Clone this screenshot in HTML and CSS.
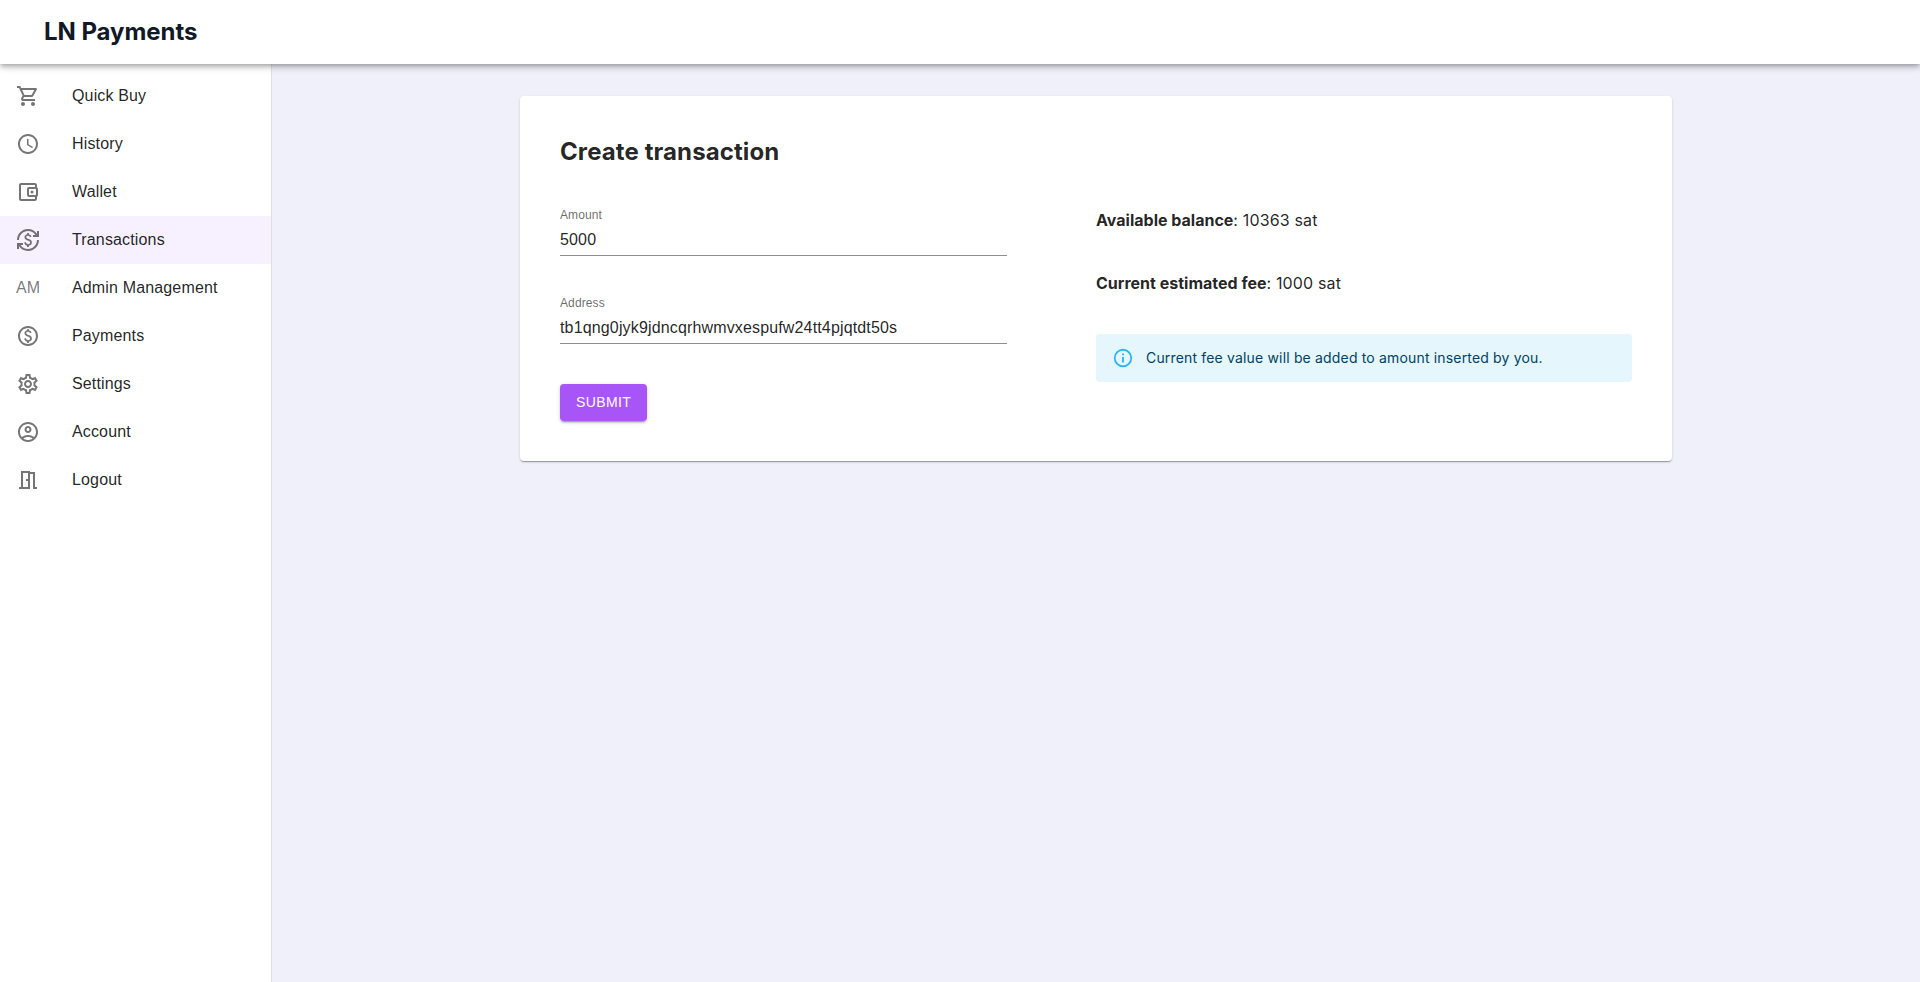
FILE: index.html
```html
<!DOCTYPE html>
<html lang="en">
<head>
<meta charset="utf-8">
<title>LN Payments</title>
<link rel="stylesheet" href="styles.css">
</head>
<body>
<header class="topbar"><h1 class="brand">LN Payments</h1></header>
<div class="shell">
  <nav class="sidebar">
    <a class="nav-item"><span class="nav-icon"><svg viewBox="0 0 24 24"><path d="M15.55 13c.75 0 1.41-.41 1.75-1.03l3.58-6.49c.37-.66-.11-1.48-.87-1.48H5.21l-.94-2H1v2h2l3.6 7.59-1.35 2.44C4.52 15.37 5.48 17 7 17h12v-2H7l1.1-2h7.45zM6.16 6h12.15l-2.76 5H8.53L6.16 6zM7 18c-1.1 0-1.99.9-1.99 2S5.9 22 7 22s2-.9 2-2-.9-2-2-2zm10 0c-1.1 0-1.99.9-1.99 2s.89 2 1.99 2 2-.9 2-2-.9-2-2-2z"/></svg></span><span class="nav-text">Quick Buy</span></a>
    <a class="nav-item"><span class="nav-icon"><svg viewBox="0 0 24 24"><path d="M11.99 2C6.47 2 2 6.48 2 12s4.47 10 9.99 10C17.52 22 22 17.52 22 12S17.52 2 11.99 2zM12 20c-4.42 0-8-3.58-8-8s3.58-8 8-8 8 3.58 8 8-3.58 8-8 8zm.5-13H11v6l5.25 3.15.75-1.23-4.5-2.67z"/></svg></span><span class="nav-text">History</span></a>
    <a class="nav-item"><span class="nav-icon"><svg viewBox="0 0 24 24"><path d="M21 7.28V5c0-1.1-.9-2-2-2H5c-1.11 0-2 .9-2 2v14c0 1.1.89 2 2 2h14c1.1 0 2-.9 2-2v-2.28c.59-.35 1-.98 1-1.72V9c0-.74-.41-1.37-1-1.72zM20 9v6h-7V9h7zM5 19V5h14v2h-6c-1.1 0-2 .9-2 2v6c0 1.1.9 2 2 2h6v2H5z"/><circle cx="16" cy="12" r="1.5"/></svg></span><span class="nav-text">Wallet</span></a>
    <a class="nav-item nav-item-active"><span class="nav-icon"><svg viewBox="0 0 24 24"><path d="M12.89 11.1c-1.78-.59-2.64-.96-2.64-1.9 0-1.02 1.11-1.39 1.81-1.39 1.31 0 1.79.99 1.9 1.34l1.58-.67c-.15-.44-.82-1.91-2.66-2.23V5h-1.75v1.26c-2.6.56-2.62 2.85-2.62 2.96 0 2.27 2.25 2.91 3.35 3.31 1.58.56 2.28 1.07 2.28 2.03 0 1.13-1.05 1.61-1.98 1.61-1.82 0-2.34-1.87-2.4-2.09l-1.66.67c.63 2.19 2.28 2.78 3.02 2.96V19h1.75v-1.24c.52-.09 3.02-.59 3.02-3.22.01-1.39-.6-2.61-3-3.44zM3 21H1v-6h6v2H4.52c1.61 2.41 4.36 4 7.48 4 4.97 0 9-4.03 9-9h2c0 6.08-4.92 11-11 11-3.72 0-7.01-1.85-9-4.67V21zm-2-9C1 5.92 5.92 1 12 1c3.72 0 7.01 1.85 9 4.67V3h2v6h-6V7h2.48C17.87 4.59 15.12 3 12 3c-4.97 0-9 4.03-9 9H1z"/></svg></span><span class="nav-text">Transactions</span></a>
    <a class="nav-item"><span class="nav-icon">AM</span><span class="nav-text">Admin Management</span></a>
    <a class="nav-item"><span class="nav-icon"><svg viewBox="0 0 24 24"><path d="M12 2C6.48 2 2 6.48 2 12s4.48 10 10 10 10-4.48 10-10S17.52 2 12 2zm0 18c-4.41 0-8-3.59-8-8s3.59-8 8-8 8 3.59 8 8-3.59 8-8 8zm.89-8.9c-1.78-.59-2.64-.96-2.64-1.9 0-1.02 1.11-1.39 1.81-1.39 1.31 0 1.79.99 1.9 1.34l1.58-.67c-.15-.44-.82-1.91-2.66-2.23V5h-1.75v1.26c-2.6.56-2.62 2.85-2.62 2.96 0 2.27 2.25 2.91 3.35 3.31 1.58.56 2.28 1.07 2.28 2.03 0 1.13-1.05 1.61-1.98 1.61-1.82 0-2.34-1.87-2.4-2.09l-1.66.67c.63 2.19 2.28 2.78 3.02 2.96V19h1.75v-1.24c.52-.09 3.02-.59 3.02-3.22.01-1.39-.6-2.61-3-3.44z"/></svg></span><span class="nav-text">Payments</span></a>
    <a class="nav-item"><span class="nav-icon"><svg viewBox="0 0 24 24"><path d="M19.43 12.98c.04-.32.07-.64.07-.98 0-.34-.03-.66-.07-.98l2.11-1.65c.19-.15.24-.42.12-.64l-2-3.46c-.09-.16-.26-.25-.44-.25-.06 0-.12.01-.17.03l-2.49 1c-.52-.4-1.08-.73-1.69-.98l-.38-2.65C14.46 2.18 14.25 2 14 2h-4c-.25 0-.46.18-.49.42l-.38 2.65c-.61.25-1.17.59-1.69.98l-2.49-1c-.06-.02-.12-.03-.18-.03-.17 0-.34.09-.43.25l-2 3.46c-.13.22-.07.49.12.64l2.11 1.65c-.04.32-.07.65-.07.98 0 .33.03.66.07.98l-2.11 1.65c-.19.15-.24.42-.12.64l2 3.46c.09.16.26.25.44.25.06 0 .12-.01.17-.03l2.49-1c.52.4 1.08.73 1.69.98l.38 2.65c.03.24.24.42.49.42h4c.25 0 .46-.18.49-.42l.38-2.65c.61-.25 1.17-.59 1.69-.98l2.49 1c.06.02.12.03.18.03.17 0 .34-.09.43-.25l2-3.46c.12-.22.07-.49-.12-.64l-2.11-1.65zm-1.98-1.71c.04.31.05.52.05.73 0 .21-.02.43-.05.73l-.14 1.13.89.7 1.08.84-.7 1.21-1.27-.51-1.04-.42-.9.68c-.43.32-.84.56-1.25.73l-1.06.43-.16 1.13-.2 1.35h-1.4l-.19-1.35-.16-1.13-1.06-.43c-.43-.18-.83-.41-1.23-.71l-.91-.7-1.06.43-1.27.51-.7-1.21 1.08-.84.89-.7-.14-1.13c-.03-.31-.05-.54-.05-.74s.02-.43.05-.73l.14-1.13-.89-.7-1.08-.84.7-1.21 1.27.51 1.04.42.9-.68c.43-.32.84-.56 1.25-.73l1.06-.43.16-1.13.2-1.35h1.39l.19 1.35.16 1.13 1.06.43c.43.18.83.41 1.23.71l.91.7 1.06-.43 1.27-.51.7 1.21-1.07.85-.89.7.14 1.13zM12 8c-2.21 0-4 1.79-4 4s1.79 4 4 4 4-1.79 4-4-1.79-4-4-4zm0 6c-1.1 0-2-.9-2-2s.9-2 2-2 2 .9 2 2-.9 2-2 2z"/></svg></span><span class="nav-text">Settings</span></a>
    <a class="nav-item"><span class="nav-icon"><svg viewBox="0 0 24 24"><path d="M12 2C6.48 2 2 6.48 2 12s4.48 10 10 10 10-4.48 10-10S17.52 2 12 2zM7.35 18.5C8.66 17.56 10.26 17 12 17s3.34.56 4.65 1.5c-1.31.94-2.91 1.5-4.65 1.5s-3.34-.56-4.65-1.5zm10.79-1.38C16.45 15.8 14.32 15 12 15s-4.45.8-6.14 2.12C4.7 15.73 4 13.95 4 12c0-4.42 3.58-8 8-8s8 3.58 8 8c0 1.95-.7 3.73-1.86 5.12zM12 6c-1.93 0-3.5 1.57-3.5 3.5S10.07 13 12 13s3.5-1.57 3.5-3.5S13.93 6 12 6zm0 5c-.83 0-1.5-.67-1.5-1.5S11.17 8 12 8s1.5.67 1.5 1.5S12.83 11 12 11z"/></svg></span><span class="nav-text">Account</span></a>
    <a class="nav-item"><span class="nav-icon"><svg viewBox="0 0 24 24"><path fill-rule="evenodd" d="M14 6v15H3v-2h2V3h9v1h5v15h2v2h-4V6h-3zM7 5v14h5V5H7zm3 6v2h2v-2h-2z"/></svg></span><span class="nav-text">Logout</span></a>
  </nav>
  <main class="content">
    <section class="card">
      <h2 class="card-title">Create transaction</h2>
      <div class="columns">
        <form class="form">
          <div class="field">
            <label class="field-label" for="amount">Amount</label>
            <input class="field-input" id="amount" type="text" value="5000">
          </div>
          <div class="field">
            <label class="field-label" for="address">Address</label>
            <input class="field-input" id="address" type="text" spellcheck="false" value="tb1qng0jyk9jdncqrhwmvxespufw24tt4pjqtdt50s">
          </div>
          <button class="submit" type="button">SUBMIT</button>
        </form>
        <div class="info">
          <p class="info-line"><b class="info-name">Available balance</b>: 10363 sat</p>
          <p class="info-line"><b class="info-name">Current estimated fee</b>: 1000 sat</p>
          <div class="alert">
            <svg class="alert-icon" viewBox="0 0 24 24"><path d="M11,9H13V7H11M12,20C7.59,20 4,16.41 4,12C4,7.59 7.59,4 12,4C16.41,4 20,7.59 20,12C20,16.41 16.41,20 12,20M12,2A10,10 0 0,0 2,12A10,10 0 0,0 12,22A10,10 0 0,0 22,12A10,10 0 0,0 12,2M11,17H13V11H11V17Z"/></svg>
            <span>Current fee value will be added to amount inserted by you.</span>
          </div>
        </div>
      </div>
    </section>
  </main>
</div>
</body>
</html>
```
FILE: styles.css
```css
* { box-sizing: border-box; }
body {
  margin: 0;
  min-height: 100vh;
  display: flex;
  flex-direction: column;
  background: #f0f0fb;
  color: rgba(0, 0, 0, 0.87);
  font-family: Inter, sans-serif;
  font-size: 16px;
}
h1, h2, p { margin: 0; }

.topbar {
  position: relative;
  z-index: 1;
  height: 64px;
  padding-left: 44px;
  display: flex;
  align-items: center;
  background: #fff;
  box-shadow: 0 2px 4px -1px rgba(0, 0, 0, 0.2), 0 4px 5px 0 rgba(0, 0, 0, 0.14), 0 1px 10px 0 rgba(0, 0, 0, 0.12);
}
.brand { color: #111827; font-size: 24px; line-height: 32px; font-weight: 700; letter-spacing: -0.05px; }

.shell { flex: 1; display: flex; }
.sidebar {
  flex: none;
  width: 272px;
  padding-top: 8px;
  background: #fff;
  border-right: 1px solid rgba(0, 0, 0, 0.12);
  font-family: "Liberation Sans", Arial, sans-serif;
}
.nav-item { height: 48px; padding: 0 16px; display: flex; align-items: center; }
.nav-item-active { background: #f7f0ff; }
.nav-icon { width: 56px; display: flex; color: rgba(0, 0, 0, 0.54); line-height: 24px; }
.nav-icon svg { width: 24px; height: 24px; fill: currentColor; }
.nav-text { line-height: 24px; letter-spacing: 0.00938em; }

.content { flex: 1; padding-top: 32px; display: flex; flex-direction: column; align-items: center; }
.card {
  width: 1152px;
  padding: 40px;
  background: #fff;
  border-radius: 4px;
  box-shadow: 0 2px 1px -1px rgba(0, 0, 0, 0.2), 0 1px 1px 0 rgba(0, 0, 0, 0.14), 0 1px 3px 0 rgba(0, 0, 0, 0.12);
}
.card-title { margin-bottom: 40px; font-size: 24px; line-height: 32px; font-weight: 700; letter-spacing: 0.1px; }
.columns { display: grid; grid-template-columns: 1fr 1fr; }
.form { display: flex; flex-direction: column; align-items: flex-start; gap: 40px; font-family: "Liberation Sans", Arial, sans-serif; }
.field { width: 83.3333%; height: 48px; border-bottom: 1px solid #8f8f8f; }
.field-label {
  display: block;
  height: 16px;
  font-size: 12px;
  line-height: 15px;
  letter-spacing: 0.00938em;
  color: rgba(0, 0, 0, 0.6);
}
.field-input {
  display: block;
  width: 100%;
  height: 31px;
  padding: 5px 0 4px;
  border: 0;
  outline: 0;
  background: none;
  color: inherit;
  font: inherit;
  letter-spacing: 0.00938em;
}
.submit {
  padding: 6px 16px;
  border: 0;
  border-radius: 4px;
  background: #a855f7;
  color: #fff;
  font: 14px/24.5px "Liberation Sans", Arial, sans-serif;
  letter-spacing: 0.02857em;
  box-shadow: 0 3px 1px -2px rgba(0, 0, 0, 0.2), 0 2px 2px 0 rgba(0, 0, 0, 0.14), 0 1px 5px 0 rgba(0, 0, 0, 0.12);
}
.info { display: flex; flex-direction: column; gap: 39px; }
.info-line { line-height: 24px; letter-spacing: 0.00938em; }
.info-name { font-weight: 700; letter-spacing: 0; }
.alert {
  height: 48px;
  padding: 0 16px;
  display: flex;
  align-items: center;
  gap: 12px;
  border-radius: 4px;
  background: #e5f6fd;
  color: #014361;
  font-size: 14px;
  line-height: 20px;
  letter-spacing: 0.012em;
}
.alert-icon { width: 22px; height: 22px; fill: #29b6f6; }
```
